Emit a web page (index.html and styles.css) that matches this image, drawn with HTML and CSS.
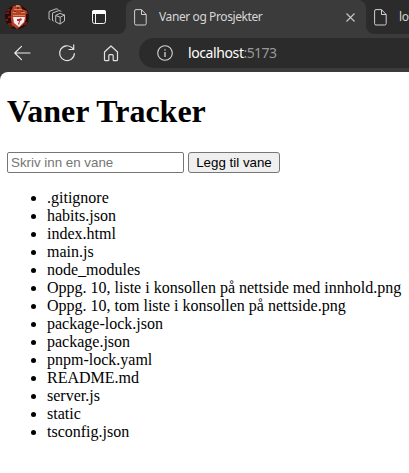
FILE: index.html
```html
<!DOCTYPE html>
<html lang="no">
<head>
<meta charset="utf-8">
<title>Vaner og Prosjekter</title>
<link rel="stylesheet" href="styles.css">
</head>
<body>
<header class="browser">
  <div class="tabbar">
    <div class="tools">
      <svg class="avatar" width="24" height="24" viewBox="0 0 24 24">
        <defs><clipPath id="round"><circle cx="12" cy="12" r="12"/></clipPath></defs>
        <g clip-path="url(#round)">
          <path fill="#260d0b" d="M0 0h24v24H0z"/>
          <path fill="#741813" d="M1 7h3v2H1zM3 11h3v2H3zM0 14h3v2H0zM3 18h5v4H3zM19 17h3v3h-3zM20 7h3v2h-3zM2 4h3v2H2z"/>
          <path fill="#b6402a" d="M8 1l4-1 4 1 1 3 5 2-1 4v5l-3 5-6 4-5-4-1-5V10L6 6l1-2z"/>
          <path fill="#d08a55" d="M11 0h4v2h-4zM9 4h8v1H9zM8 7h3v1H8zM16 7h4v1h-4zM8 10h12v1H8z"/>
          <path fill="#8c2018" d="M9 6h2v1H9zM16 6h2v1h-2zM12 2h2v2h-2z"/>
          <path fill="#f7eeee" d="M8 12h12l-1 5-5 5-5-4z"/>
          <path fill="#b9272f" d="M12 14h2l2-1 1 2-2 1-1 4-1-1 1-3h-2z"/>
        </g>
      </svg>
      <svg class="workspaces" width="18" height="18" viewBox="0 0 18 18" fill="none" stroke="#bdbdbd" stroke-linejoin="round" stroke-linecap="round">
        <path d="M8 7.200l4-1.800 4.500 1.600v6l-4.300 3-4.500-2V7.500l4.500 1.700v6.500M12.200 9.200L16.500 7M5.500 13L4.500 12.500V5L11 2.500l2 .7M2 11.500L1 11V3.500L8 .8l2 .5"/>
      </svg>
      <svg class="tabmenu" width="14" height="14" viewBox="0 0 14 14" fill="none" stroke="#f4f4f4">
        <rect x=".5" y=".5" width="13" height="13" rx="2"/>
        <path fill="#fff" stroke="none" d="M2 0h10q2 0 2 2v2H0V2q0-2 2-2z"/>
        <path d="M3.500 4v9.500"/>
      </svg>
    </div>
    <div class="tab active">
      <svg width="13" height="17" viewBox="0 0 13 17" fill="none" stroke="#d0d0d0" stroke-linejoin="round"><path d="M2 .6h5.500l4.700 4.900V14.500q0 1.500-1.500 1.500H2Q.6 16 .6 14.500V2Q.6.6 2 .6zM7.500.8v4.700h4.500"/></svg>
      <span class="title">Vaner og Prosjekter</span>
      <svg class="close" width="9" height="9" viewBox="0 0 9 9" stroke="#c7c7c7" stroke-width="1.1"><path d="M.5.5l8 8M8.500.5l-8 8"/></svg>
    </div>
    <div class="tab next">
      <svg width="13" height="17" viewBox="0 0 13 17" fill="none" stroke="#d0d0d0" stroke-linejoin="round"><path d="M2 .6h5.500l4.700 4.900V14.500q0 1.500-1.500 1.500H2Q.6 16 .6 14.500V2Q.6.6 2 .6zM7.500.8v4.700h4.500"/></svg>
      <span class="title">localhost</span>
    </div>
  </div>
  <nav class="toolbar">
    <svg class="back" width="17" height="16" viewBox="0 0 17 16" fill="none" stroke="#eee" stroke-width="1.1" stroke-linecap="round" stroke-linejoin="round"><path d="M16 8H1M7.500 1.300L.8 8l6.700 6.700"/></svg>
    <svg class="reload" width="18" height="18" viewBox="0 0 18 18" fill="none" stroke="#e2e2e2" stroke-width="1.2" stroke-linecap="round" stroke-linejoin="round"><path d="M16.400 9.500A7.400 7.400 0 1 1 14.500 4.200L15.500 5.300M15.700.8v4.700H11"/></svg>
    <svg class="home" width="16" height="17" viewBox="0 0 16 17" fill="none" stroke="#e2e2e2" stroke-width="1.2" stroke-linejoin="round"><path d="M1.500 7L8 1l6.500 6v7.700q0 1-1 1H11q-.8 0-.8-.8v-4.200q0-1-1-1H6.800q-1 0-1 1v4.200q0 .8-.8.8H2.500q-1 0-1-1z"/></svg>
    <div class="address">
      <svg width="16" height="16" viewBox="0 0 16 16" fill="none" stroke="#d5d5d5" stroke-width="1.1"><circle cx="8" cy="8" r="7.300"/><path d="M8 7v5M8 4.200v1.300" stroke-width="1.300"/></svg>
      <span class="url">localhost<span class="port">:5173</span></span>
    </div>
  </nav>
</header>
<main class="page">
  <h1>Vaner Tracker</h1>
  <form class="habit-form">
    <input class="habit-input" type="text" placeholder="Skriv inn en vane">
    <button class="add" type="button">Legg til vane</button>
  </form>
  <ul class="files">
    <li>.gitignore</li>
    <li>habits.json</li>
    <li>index.html</li>
    <li>main.js</li>
    <li>node_modules</li>
    <li>Oppg. 10, liste i konsollen på nettside med innhold.png</li>
    <li>Oppg. 10, tom liste i konsollen på nettside.png</li>
    <li>package-lock.json</li>
    <li>package.json</li>
    <li>pnpm-lock.yaml</li>
    <li>README.md</li>
    <li>server.js</li>
    <li>static</li>
    <li>tsconfig.json</li>
  </ul>
</main>
</body>
</html>
```
FILE: styles.css
```css
* { box-sizing: border-box; }
body {
  margin: 0;
  height: 473px;
  overflow: hidden;
  display: flex;
  flex-direction: column;
  background: #3b3b3b;
}
svg { display: block; flex: none; }
.browser { flex: none; height: 72px; }
.tabbar {
  display: grid;
  grid-template-columns: 126px 240px 43px;
  height: 34px;
  background: linear-gradient(#2b2b2b 50%, #3b3b3b 50%);
  font: 12px/16px "Noto Sans", "Open Sans", sans-serif;
  color: #d6d6d6;
}
.tools {
  display: flex;
  align-items: center;
  padding-left: 5px;
  background: #2b2b2b;
  border-bottom-right-radius: 8px;
}
.workspaces { margin-left: 19px; }
.tabmenu { margin-left: 26px; }
.tab {
  display: flex;
  align-items: center;
  overflow: hidden;
  white-space: nowrap;
}
.active {
  padding: 0 11px 0 8px;
  background: #3b3b3b;
  border-radius: 8px 8px 0 0;
}
.active .title { margin-left: 12px; letter-spacing: -0.4px; }
.close { margin-left: auto; }
.next {
  padding-left: 8px;
  background: #2b2b2b;
  border-bottom-left-radius: 8px;
}
.next .title { margin-left: 12px; letter-spacing: -0.4px; }
.toolbar {
  display: flex;
  align-items: center;
  height: 38px;
  padding-left: 14px;
}
.reload { margin-left: 27px; }
.home { margin-left: 27px; }
.address {
  flex: 1;
  display: flex;
  align-items: center;
  height: 30px;
  margin-left: 20px;
  padding-left: 18px;
  background: #2b2b2b;
  border-radius: 15px 0 0 15px;
  font: 14px/20px "Noto Sans", "Open Sans", sans-serif;
}
.url { margin-left: 15px; color: #fff; letter-spacing: -0.4px; }
.port { color: #999; letter-spacing: -0.6px; }
.page {
  flex: 1;
  padding: 0 0 0 7px;
  background: #fff;
  border-top-left-radius: 8px;
  color: #000;
  font: 16px/18px "Liberation Serif", serif;
}
h1 { margin: 21px 0 22px; font-size: 32px; line-height: 37px; }
.habit-form { display: flex; gap: 4px; height: 21px; }
.habit-input, .add {
  height: 21px;
  margin: 0;
  border: 1px solid #767676;
  border-radius: 2px;
  font: 13.333px/15px "Liberation Sans", sans-serif;
}
.habit-input { width: 177px; padding: 1px 3px; background: #fff; }
.habit-input::placeholder { color: #757575; }
.add {
  width: 92px;
  padding: 1px 0;
  border-radius: 3px;
  background: #efefef;
  color: #000;
  white-space: nowrap;
}
.files { margin: 16px 0; padding-left: 40px; }
```
